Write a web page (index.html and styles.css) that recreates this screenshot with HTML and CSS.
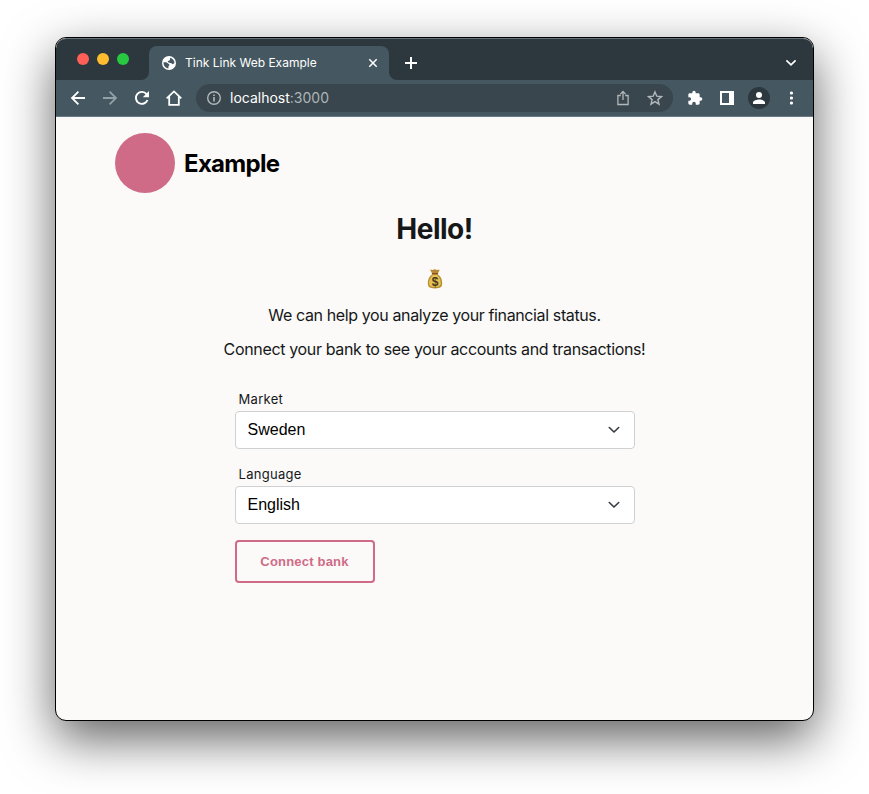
FILE: index.html
```html
<!DOCTYPE html>
<html lang="en">
<head>
<meta charset="utf-8">
<title>Tink Link Web Example</title>
<link rel="stylesheet" href="styles.css">
</head>
<body>
<div class="window">
  <div class="tabstrip">
    <div class="lights"><span class="light red"></span><span class="light yellow"></span><span class="light green"></span></div>
    <div class="tab">
      <svg class="globe" width="14" height="14" viewBox="0 0 14 14"><circle cx="7" cy="7" r="7" fill="#fff"/><path d="M1.5 6.200H4.200L6.600 7.800 7.600 9 6.500 10.200 6.400 12.400C3.600 12.100 1.300 9.600 1.500 6.200ZM8.200 1.700C10.700 2.300 12.400 4.400 12.500 7L10.800 8.300 9.300 7.200 6.500 6.600 5.600 5.300 7.800 4.300Z" fill="#455760"/></svg>
      <span class="tab-title">Tink Link Web Example</span>
      <svg class="tab-close" width="10" height="10" viewBox="0 0 10 10"><path d="M1.3 1.3 8.7 8.7M8.7 1.3 1.3 8.7" stroke="#fff" stroke-width="1.5"/></svg>
    </div>
    <svg class="new-tab" width="12" height="12" viewBox="0 0 12 12"><path d="M6 0V12M0 6H12" stroke="#fff" stroke-width="2"/></svg>
    <svg class="tab-menu" width="12" height="8" viewBox="0 0 12 8"><path d="M1.4 1.3 6 5.8 10.6 1.3" fill="none" stroke="#fff" stroke-width="1.7"/></svg>
  </div>
  <div class="toolbar">
    <div class="nav">
      <svg width="16" height="16" viewBox="0 0 16 16"><path d="M15 8H2.2M8.4 1.7 2 8l6.4 6.3" fill="none" stroke="#fff" stroke-width="1.8"/></svg>
      <svg width="16" height="16" viewBox="0 0 16 16"><path d="M1 8h12.8M7.6 1.7 14 8l-6.4 6.3" fill="none" stroke="#93a0a6" stroke-width="1.8"/></svg>
      <svg width="16" height="16" viewBox="0 0 16 16"><path d="M13.5 10A6 6 0 1 1 12.6 4.1L14 5.5" fill="none" stroke="#fff" stroke-width="1.9"/><path d="M15 1v6.2H8.8Z" fill="#fff"/></svg>
      <svg width="16" height="16" viewBox="0 0 16 16"><path d="M.7 8.4 8 1.4l7.3 7M3.2 6.5v8.3h9.6V6.5" fill="none" stroke="#fff" stroke-width="1.8"/></svg>
    </div>
    <div class="address">
      <svg width="14" height="14" viewBox="0 0 14 14"><circle cx="7" cy="7" r="6.3" fill="none" stroke="#b2b8bb" stroke-width="1.4"/><path d="M7 6v4.5M7 3.4v1.5" stroke="#b2b8bb" stroke-width="1.6"/></svg>
      <span class="url">localhost<span class="port">:3000</span></span>
      <svg class="share" width="12" height="16" viewBox="0 0 12 16"><path d="M3.8 5.5H.9v9h10.2v-9H8.2M6 10V1.8M3.4 4.1 6 1.5l2.6 2.6" fill="none" stroke="#b2b8bb" stroke-width="1.3"/></svg>
      <svg class="star" width="16" height="16" viewBox="0 0 16 16"><path d="m8 1.9 1.8 4.3 4.6.4-3.5 3 1.1 4.6-4-2.5-4 2.5 1.1-4.6-3.5-3 4.6-.4Z" fill="none" stroke="#b2b8bb" stroke-width="1.4"/></svg>
    </div>
    <div class="actions">
      <svg width="16" height="16" viewBox="0 0 24 24"><path d="M20.5 11H19V7c0-1.100-.9-2-2-2h-4V3.500a2.500 2.500 0 0 0-5 0V5H4c-1.100 0-2 .9-2 2v3.800h1.500a2.700 2.700 0 0 1 0 5.400H2V20c0 1.100.9 2 2 2h3.800v-1.500a2.700 2.700 0 0 1 5.400 0V22H17c1.100 0 2-.9 2-2v-4h1.500a2.500 2.500 0 0 0 0-5Z" fill="#fff"/></svg>
      <svg class="panel" width="14" height="14" viewBox="0 0 14 14"><path fill-rule="evenodd" d="M0 0h14v14H0ZM2 2v10h7V2Z" fill="#fff"/></svg>
      <svg class="profile" width="22" height="22" viewBox="0 0 22 22"><circle cx="11" cy="11" r="11" fill="#2d383e"/><circle cx="11" cy="8" r="3" fill="#fff"/><path d="M5 17v-1.500c0-2 4-3 6-3s6 1 6 3V17Z" fill="#fff"/></svg>
      <svg class="dots" width="4" height="14" viewBox="0 0 4 14"><g fill="#fff"><circle cx="1.500" cy="2" r="1.600"/><circle cx="1.500" cy="7" r="1.600"/><circle cx="1.500" cy="12" r="1.600"/></g></svg>
    </div>
  </div>
  <main class="page">
    <header class="brand"><span class="logo"></span><span class="brand-name">Example</span></header>
    <h1>Hello!</h1>
    <svg class="moneybag" width="16" height="20" viewBox="0 0 16 20" role="img" aria-label="Money bag">
      <path d="M3 .8C4.500.3 5.500 1.300 6.500.7S8.500.3 9.500.8s2-.4 3.200.2L10.500 5h-5Z" fill="#b88a35"/>
      <path d="M5.500 5C2.500 7 .8 10 .8 14c0 4 1.700 5.400 7.200 5.400s7.200-1.400 7.200-5.400c0-4-1.700-7-4.700-9Z" fill="#b98f34"/>
      <path d="M5.800 6C3.800 8 2.100 11 2.100 14c0 3 2 4 5.900 4s5.700-1.200 5.700-4c0-3-1.500-6-3.500-8Z" fill="#e8c252"/>
      <path d="M5.300 4.600h5.400" stroke="#8b4f24" stroke-width="1.100" stroke-linecap="round"/>
      <text x="8" y="16.500" text-anchor="middle" class="dollar">$</text>
    </svg>
    <p class="lead first">We can help you analyze your financial status.</p>
    <p class="lead second">Connect your bank to see your accounts and transactions!</p>
    <form class="form">
      <label class="market" for="market">Market</label>
      <div class="field"><select id="market"><option>Sweden</option></select><svg class="chevron" width="12" height="8" viewBox="0 0 12 8"><path d="M1.300 1.500 6 6 10.700 1.500" fill="none" stroke="#343a40" stroke-width="1.600" stroke-linecap="round" stroke-linejoin="round"/></svg></div>
      <label class="language" for="language">Language</label>
      <div class="field"><select id="language"><option>English</option></select><svg class="chevron" width="12" height="8" viewBox="0 0 12 8"><path d="M1.300 1.500 6 6 10.700 1.500" fill="none" stroke="#343a40" stroke-width="1.600" stroke-linecap="round" stroke-linejoin="round"/></svg></div>
      <button type="button">Connect bank</button>
    </form>
  </main>
</div>
</body>
</html>
```
FILE: styles.css
```css
* { box-sizing: border-box; }
body { margin: 0; padding: 37px 55px; background: #fff; height: 794px; overflow: hidden; font-family: Inter, "Liberation Sans", sans-serif; }
svg { display: block; flex: none; }
.window { width: 759px; height: 684px; border: 1px solid #000; border-radius: 11px; overflow: hidden; background: #fbfaf8; box-shadow: 0 18px 50px rgba(0,0,0,.62); }
.tabstrip { height: 42px; background: #2d383e; border-top: 1px solid #66737a; display: flex; align-items: flex-end; position: relative; border-radius: 10px 10px 0 0; }
.lights { display: flex; gap: 8px; padding: 0 20px 15px 21px; }
.light { width: 12px; height: 12px; border-radius: 50%; }
.red { background: #ff5f57; }
.yellow { background: #febc2e; }
.green { background: #28c840; }
.tab { position: relative; width: 240px; height: 34px; background: #455760; border-radius: 8px 8px 0 0; display: flex; align-items: center; padding: 0 11px 0 13px; }
.tab::before, .tab::after { content: ""; position: absolute; bottom: 0; width: 8px; height: 8px; }
.tab::before { left: -8px; background: radial-gradient(circle at 0 0, transparent 7.5px, #455760 8.5px); }
.tab::after { right: -8px; background: radial-gradient(circle at 100% 0, transparent 7.5px, #455760 8.5px); }
.tab-title { margin-left: 9px; color: #fff; font: 12px/16px Inter, sans-serif; white-space: nowrap; flex: 1; }
.new-tab { margin: 0 auto 11px 16px; }
.tab-menu { margin: 0 16px 13px 0; }
.toolbar { height: 37px; background: #455760; border-bottom: 1px solid #6c7b83; display: flex; align-items: center; padding: 0 19px 0 14px; }
.nav { display: flex; gap: 16px; }
.address { width: 477px; height: 28px; margin-left: 14px; border-radius: 14px; background: #39464d; display: flex; align-items: center; padding: 0 10px 0 11px; }
.url { margin-left: 9px; flex: 1; color: #fff; font: 14px/18px Inter, sans-serif; }
.port { color: #aeb5b8; }
.star { margin-left: 18px; }
.actions { display: flex; align-items: center; margin-left: 14px; }
.panel { margin-left: 17px; }
.profile { margin-left: 14px; }
.dots { margin-left: 20px; }
.page { padding-top: 16px; display: flex; flex-direction: column; align-items: center; color: #151719; }
.brand { align-self: flex-start; margin-left: 59px; height: 60px; display: flex; align-items: center; gap: 9px; }
.logo { width: 60px; height: 60px; border-radius: 50%; background: #cf6b87; }
.brand-name { padding-top: 2px; font-weight: 700; font-size: 24px; line-height: 30px; letter-spacing: -.7px; color: #000; }
h1 { margin: 19px 0 0; font-size: 28px; line-height: 34px; letter-spacing: -.5px; font-weight: 700; }
.moneybag { margin-top: 23px; }
.dollar { font: bold 12px "Liberation Sans", sans-serif; fill: #43391c; }
.lead { margin: 0; font-size: 16px; line-height: 24px; white-space: nowrap; }
.first { margin-top: 14px; letter-spacing: -.38px; }
.second { margin-top: 10px; letter-spacing: -.35px; }
.form { width: 400px; margin-top: 28px; display: flex; flex-direction: column; align-items: flex-start; }
label { margin-left: 4px; font-size: 13px; line-height: 20px; letter-spacing: .3px; }
.field { width: 400px; height: 38px; margin: 2px 0 15px; position: relative; }
select { display: block; width: 100%; height: 100%; appearance: none; border: 1px solid #ced0d2; border-radius: 4px; background: #fff; color: #000; font: 16px "Liberation Sans", sans-serif; padding: 0 12px 2px; }
.chevron { position: absolute; right: 15px; top: 15px; pointer-events: none; }
button { width: 140px; height: 43px; margin-top: 1px; border: 2px solid #cf6b87; border-radius: 4px; background: transparent; color: #cf6b87; font: bold 13px "Liberation Sans", sans-serif; letter-spacing: .2px; padding: 0; }
```
